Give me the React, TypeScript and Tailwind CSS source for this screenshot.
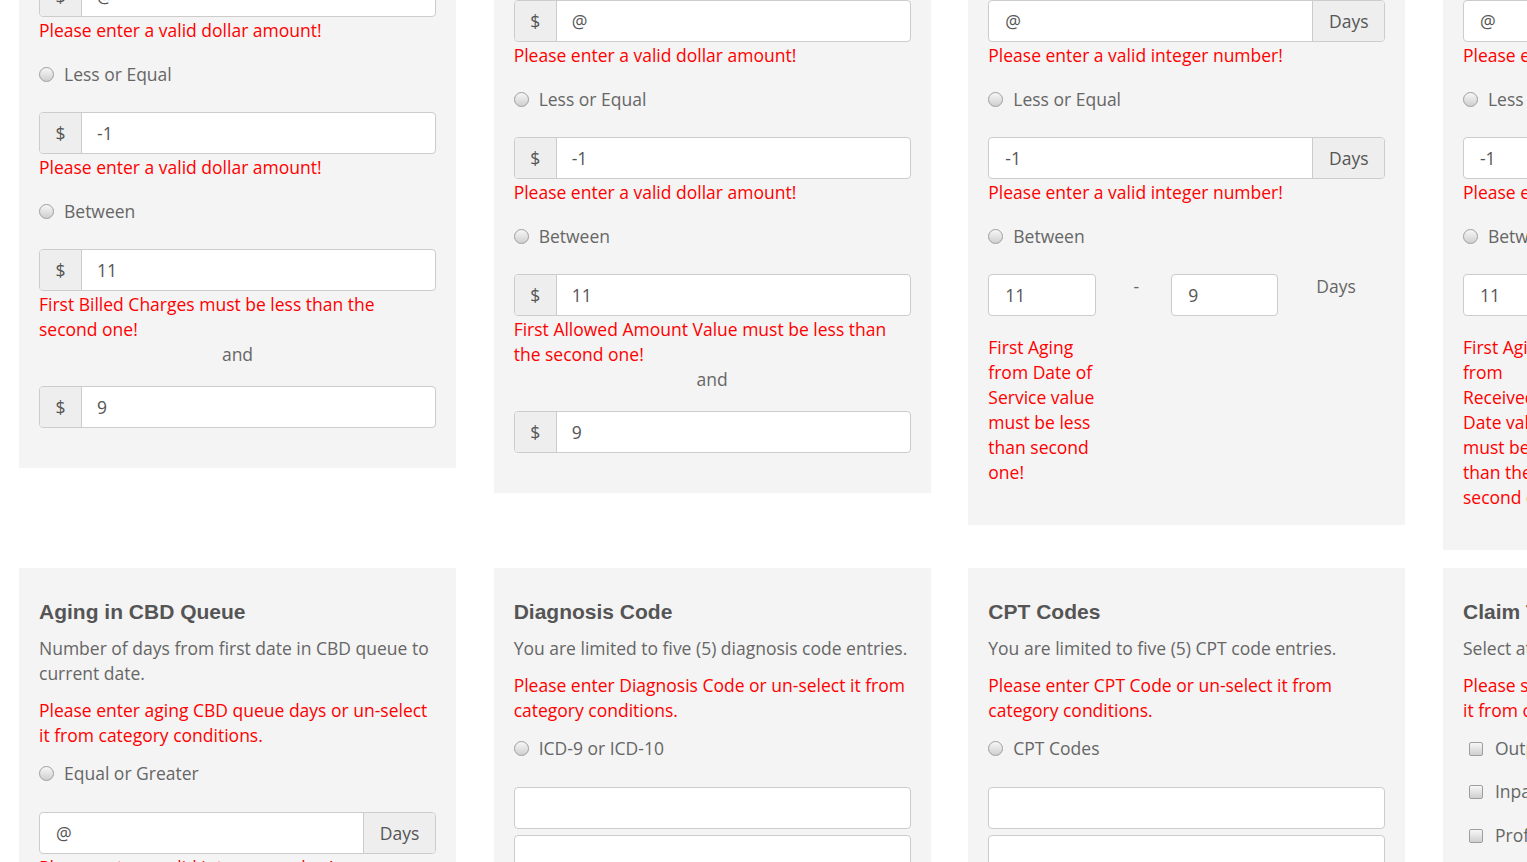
import React from "react";

const Radio = ({ label, cls = "" }: { label: string; cls?: string }) => (
  <div className={`flex items-center h-[25px] leading-[25px] whitespace-nowrap ${cls}`}>
    <span className="w-[15px] h-[15px] rounded-full border border-[#9e9e9e] bg-linear-to-b from-[#f7f7f7] to-[#cfcfcf] shrink-0" />
    <span className="ml-[10px]">{label}</span>
  </div>
);

const Check = ({ label, cls = "" }: { label: string; cls?: string }) => (
  <div className={`flex items-center h-[25px] leading-[25px] whitespace-nowrap ${cls}`}>
    <span className="ml-[6px] w-[14px] h-[14px] rounded-[2px] border border-[#9e9e9e] bg-linear-to-b from-[#f7f7f7] to-[#cfcfcf] shrink-0" />
    <span className="ml-[12px]">{label}</span>
  </div>
);

const Dollar = ({ value, cls = "" }: { value: string; cls?: string }) => (
  <div className={`flex h-[42px] border border-[#ccc] rounded-[4px] overflow-hidden bg-white text-[#555] ${cls}`}>
    <div className="w-[42px] shrink-0 bg-[#eee] border-r border-[#ccc] flex items-center justify-center">$</div>
    <div className="pl-[15px] flex items-center">{value}</div>
  </div>
);

const Days = ({ value, cls = "" }: { value: string; cls?: string }) => (
  <div className={`flex h-[42px] border border-[#ccc] rounded-[4px] overflow-hidden bg-white text-[#555] ${cls}`}>
    <div className="flex-1 pl-[16px] flex items-center">{value}</div>
    <div className="w-[72px] shrink-0 bg-[#eee] border-l border-[#ccc] flex items-center justify-center">Days</div>
  </div>
);

const Plain = ({ value = "", cls = "" }: { value?: string; cls?: string }) => (
  <div className={`flex h-[42px] border border-[#ccc] rounded-[4px] bg-white text-[#555] pl-[16px] items-center ${cls}`}>{value}</div>
);

const Err = ({ children, cls = "" }: { children: React.ReactNode; cls?: string }) => (
  <p className={`text-[#ff0000] leading-[25px] whitespace-nowrap ${cls}`}>{children}</p>
);

const Head = ({ title, desc, err }: { title: string; desc: React.ReactNode; err: React.ReactNode }) => (
  <>
    <h4 className="mt-[12px] mb-[12px] h-[24px] leading-[24px] font-['Liberation_Sans',Arial,sans-serif] font-bold text-[21px] text-[#555] whitespace-nowrap">
      {title}
    </h4>
    <p className="mb-[12px] leading-[25px] whitespace-nowrap">{desc}</p>
    <Err cls="mb-[13px]">{err}</Err>
  </>
);

const Card = ({ children, cls = "" }: { children: React.ReactNode; cls?: string }) => (
  <div className={`w-[437px] shrink-0 bg-[#f4f4f4] px-[20px] pt-[20px] pb-[39px] shadow-[0_1px_1px_rgba(0,0,0,0.04)] ${cls}`}>
    {children}
  </div>
);

const DollarCard = ({ title, desc, err, between }: { title: string; desc: React.ReactNode; err: React.ReactNode; between: React.ReactNode }) => (
  <Card>
    <Head title={title} desc={desc} err={err} />
    <Radio label="Equal or Greater" cls="mb-[25px]" />
    <Dollar value="@" />
    <Err cls="mt-[1px]">Please enter a valid dollar amount!</Err>
    <Radio label="Less or Equal" cls="mt-[19px] mb-[25px]" />
    <Dollar value="-1" />
    <Err cls="mt-[1px]">Please enter a valid dollar amount!</Err>
    <Radio label="Between" cls="mt-[19px] mb-[25px]" />
    <Dollar value="11" />
    <Err cls="mt-[1px]">{between}</Err>
    <p className="text-center leading-[25px]">and</p>
    <Dollar value="9" cls="mt-[19px]" />
  </Card>
);

const AgingCard = ({ title, desc, err, between }: { title: string; desc: React.ReactNode; err: React.ReactNode; between: React.ReactNode }) => (
  <Card>
    <Head title={title} desc={desc} err={err} />
    <Radio label="Equal or Greater" cls="mb-[25px]" />
    <Days value="@" />
    <Err cls="mt-[1px]">Please enter a valid integer number!</Err>
    <Radio label="Less or Equal" cls="mt-[19px] mb-[25px]" />
    <Days value="-1" />
    <Err cls="mt-[1px]">Please enter a valid integer number!</Err>
    <Radio label="Between" cls="mt-[19px] mb-[25px]" />
    <div className="flex items-start">
      <div className="w-[108px] shrink-0">
        <Plain value="11" />
        <Err cls="mt-[19px]">{between}</Err>
      </div>
      <div className="w-[75px] shrink-0 pl-[5px] text-center leading-[25px]">-</div>
      <Plain value="9" cls="w-[107px] shrink-0" />
      <div className="ml-[38px] leading-[25px]">Days</div>
    </div>
  </Card>
);

export default function App() {
  return (
    <div className="w-[1527px] h-[862px] overflow-hidden bg-white font-['Open_Sans',sans-serif] text-[17.5px] text-[#666]">
      <div className="pl-[19px]">
        <div className="flex items-start gap-[37.67px] -mt-[243px]">
          <DollarCard
            title="Billed Charges"
            desc="Total billed charges amount of the claim."
            err={<>Please enter billed charges or un-select<br />it from category conditions.</>}
            between={<>First Billed Charges must be less than the<br />second one!</>}
          />
          <DollarCard
            title="Allowed Amount"
            desc={<>Total allowed amount value of the claim<br />lines.</>}
            err={<>Please enter allowed amount or un-select<br />it from category conditions.</>}
            between={<>First Allowed Amount Value must be less than<br />the second one!</>}
          />
          <AgingCard
            title="Aging from Date of Service"
            desc={<>Number of days from date of service to<br />current date.</>}
            err={<>Please enter aging days or un-select it<br />from category conditions.</>}
            between={<>First Aging<br />from Date of<br />Service value<br />must be less<br />than second<br />one!</>}
          />
          <AgingCard
            title="Aging from Received Date"
            desc={<>Number of days from received date to<br />current date.</>}
            err={<>Please enter aging days or un-select it<br />from category conditions.</>}
            between={<>First Aging<br />from<br />Received<br />Date value<br />must be less<br />than the<br />second one!</>}
          />
        </div>

        <div className="flex items-start gap-[37.67px] mt-[19px]">
          <Card>
            <Head
              title="Aging in CBD Queue"
              desc={<>Number of days from first date in CBD queue to<br />current date.</>}
              err={<>Please enter aging CBD queue days or un-select<br />it from category conditions.</>}
            />
            <Radio label="Equal or Greater" cls="mb-[26px]" />
            <Days value="@" />
            <Err cls="mt-[1px]">Please enter a valid integer number!</Err>
          </Card>
          <Card>
            <Head
              title="Diagnosis Code"
              desc="You are limited to five (5) diagnosis code entries."
              err={<>Please enter Diagnosis Code or un-select it from<br />category conditions.</>}
            />
            <Radio label="ICD-9 or ICD-10" cls="mb-[26px]" />
            <Plain />
            <Plain cls="mt-[6px]" />
            <Plain cls="mt-[6px]" />
          </Card>
          <Card>
            <Head
              title="CPT Codes"
              desc="You are limited to five (5) CPT code entries."
              err={<>Please enter CPT Code or un-select it from<br />category conditions.</>}
            />
            <Radio label="CPT Codes" cls="mb-[26px]" />
            <Plain />
            <Plain cls="mt-[6px]" />
            <Plain cls="mt-[6px]" />
          </Card>
          <Card>
            <Head
              title="Claim Type"
              desc="Select at least one claim type."
              err={<>Please select claim type or un-select<br />it from category conditions.</>}
            />
            <Check label="Outpatient" />
            <Check label="Inpatient" cls="mt-[18px]" />
            <Check label="Professional" cls="mt-[19px]" />
          </Card>
        </div>
      </div>
    </div>
  );
}
